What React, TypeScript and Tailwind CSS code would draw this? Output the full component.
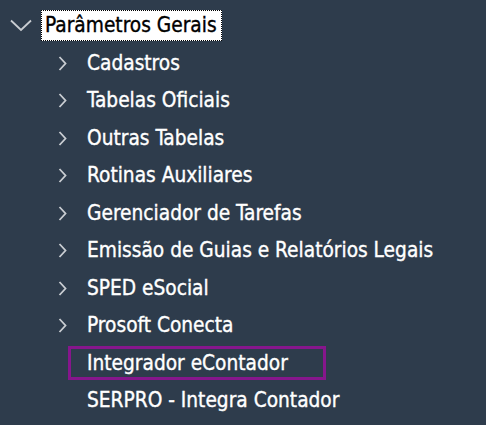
import React from "react";

const items: { label: string; expandable: boolean; selected?: boolean }[] = [
  { label: "Cadastros", expandable: true },
  { label: "Tabelas Oficiais", expandable: true },
  { label: "Outras Tabelas", expandable: true },
  { label: "Rotinas Auxiliares", expandable: true },
  { label: "Gerenciador de Tarefas", expandable: true },
  { label: "Emissão de Guias e Relatórios Legais", expandable: true },
  { label: "SPED eSocial", expandable: true },
  { label: "Prosoft Conecta", expandable: true },
  { label: "Integrador eContador", expandable: false, selected: true },
  { label: "SERPRO - Integra Contador", expandable: false },
];

const ChevronDown = () => (
  <svg width="22" height="13" viewBox="0 0 22 13" className="shrink-0">
    <path d="M1 1.5 L11 11 L21 1.5" fill="none" stroke="#c9cdd2" strokeWidth="1.8" />
  </svg>
);

const ChevronRight = () => (
  <svg width="9" height="15" viewBox="0 0 9 15" className="shrink-0">
    <path d="M1.5 1 L7.5 7.5 L1.5 14" fill="none" stroke="#c9cdd2" strokeWidth="1.8" />
  </svg>
);

export default function App() {
  return (
    <div
      className="h-[425px] w-[486px] overflow-hidden bg-[#2e3c4c] pt-[7px] text-[20.7px] text-white"
      style={{ fontFamily: '"DejaVu Sans Condensed", "DejaVu Sans", sans-serif' }}
    >
      {/* root node */}
      <div className="flex h-[37.5px] items-center">
        <div className="flex w-[41px] justify-center pl-[1px]">
          <ChevronDown />
        </div>
        <div className="flex h-[31px] items-center border border-dotted border-black bg-white pl-[3px] pr-[4px] text-black [-webkit-text-stroke:0.35px_black]">
          Parâmetros Gerais
        </div>
      </div>

      {/* children */}
      {items.map((item) => (
        <div
          key={item.label}
          className="flex h-[37.5px] items-center [-webkit-text-stroke:0.35px_white]"
        >
          <div className="flex w-[69px] justify-end pr-[2px]">
            {item.expandable && <ChevronRight />}
          </div>
          {item.selected ? (
            <div className="-ml-[1px] flex h-[34px] w-[258px] items-center border-[3px] border-[#86168c] pl-[16px]">
              {item.label}
            </div>
          ) : (
            <div className="pl-[18px]">{item.label}</div>
          )}
        </div>
      ))}
    </div>
  );
}
